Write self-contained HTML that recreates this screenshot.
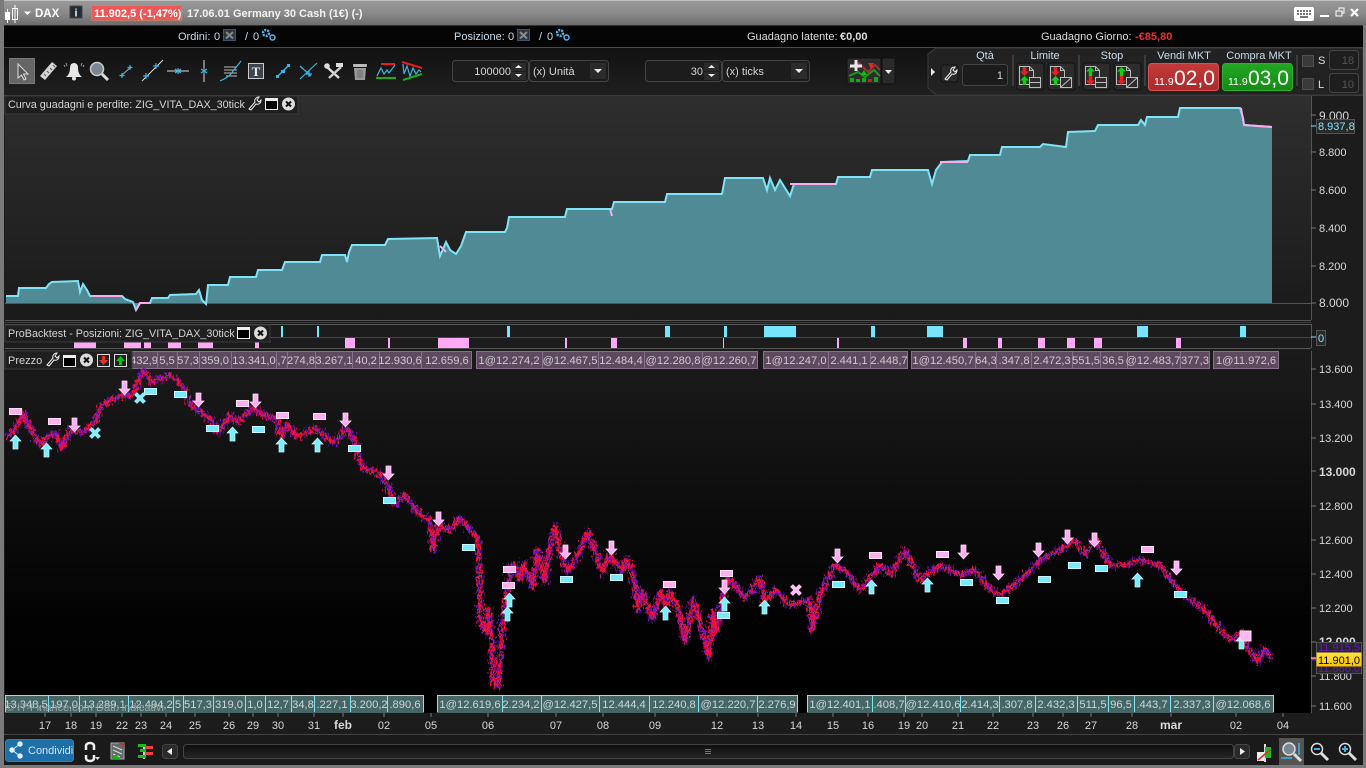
<!DOCTYPE html>
<html><head><meta charset="utf-8"><title>DAX</title>
<style>
html,body{margin:0;padding:0;background:#000;width:1366px;height:768px;overflow:hidden}
svg{display:block;font-family:"Liberation Sans",sans-serif}
text{font-size:11px;fill:#d4d4d4}
.r{shape-rendering:crispEdges}
.p text{fill:#d0c8d0;text-anchor:middle;font-size:11.2px}
.p rect{fill:#5d4a5e;stroke:#8a6f8d;shape-rendering:crispEdges}
.g text{fill:#ccd6d6;text-anchor:middle;font-size:11.2px}
.g rect{fill:#466666;stroke:#7fe8f8;shape-rendering:crispEdges}
.lab text{fill:#c8dcec}
.ax text{fill:#d8d8d8;font-size:11px}
.t text{fill:#d8d8d8;text-anchor:middle;font-size:11px}
.ua{fill:#7fecfb;stroke:#c8f8ff;stroke-width:.7}
.da{fill:#ffb0f2;stroke:#ffe0fa;stroke-width:.7}
.cb{fill:#7aeafa;stroke:#c8f8ff;stroke-width:1;shape-rendering:crispEdges}
.pb{fill:#fdb0ef;stroke:#ffe0fa;stroke-width:1;shape-rendering:crispEdges}
.ic{stroke:#39b6e8;stroke-width:1.2;fill:none}
.ttl{font-size:10.8px}
</style></head><body>
<svg width="1366" height="768" viewBox="0 0 1366 768" xmlns="http://www.w3.org/2000/svg">
<defs>
<linearGradient id="tb" x1="0" y1="0" x2="0" y2="1"><stop offset="0" stop-color="#999"/><stop offset=".5" stop-color="#8a8a8a"/><stop offset="1" stop-color="#6c6c6c"/></linearGradient>
<linearGradient id="pn1" x1="0" y1="0" x2="0" y2="1"><stop offset="0" stop-color="#2e2e2e"/><stop offset="1" stop-color="#1a1a1a"/></linearGradient>
<linearGradient id="pn3" x1="0" y1="0" x2="0" y2="1"><stop offset="0" stop-color="#1b1b1b"/><stop offset=".75" stop-color="#020202"/><stop offset="1" stop-color="#000"/></linearGradient>
<linearGradient id="tl" x1="0" y1="0" x2="0" y2="1"><stop offset="0" stop-color="#111"/><stop offset="1" stop-color="#1f1f1f"/></linearGradient>
<linearGradient id="red" x1="0" y1="0" x2="0" y2="1"><stop offset="0" stop-color="#c43a3a"/><stop offset="1" stop-color="#a82c2c"/></linearGradient>
<linearGradient id="grn" x1="0" y1="0" x2="0" y2="1"><stop offset="0" stop-color="#22a822"/><stop offset="1" stop-color="#158a15"/></linearGradient>
<linearGradient id="yl" x1="0" y1="0" x2="0" y2="1"><stop offset="0" stop-color="#ffe23a"/><stop offset="1" stop-color="#f8c400"/></linearGradient>
<linearGradient id="sb" x1="0" y1="0" x2="0" y2="1"><stop offset="0" stop-color="#0e0e0e"/><stop offset="1" stop-color="#262626"/></linearGradient>
<filter id="j1" x="-2%" y="-10%" width="104%" height="120%" color-interpolation-filters="sRGB"><feTurbulence type="fractalNoise" baseFrequency=".6 .2" numOctaves="2" seed="3"/><feDisplacementMap in="SourceGraphic" scale="17" xChannelSelector="R" yChannelSelector="G"/></filter>
<filter id="j2" x="-2%" y="-10%" width="104%" height="120%" color-interpolation-filters="sRGB"><feTurbulence type="fractalNoise" baseFrequency=".5 .25" numOctaves="2" seed="8"/><feDisplacementMap in="SourceGraphic" scale="15" xChannelSelector="R" yChannelSelector="G"/></filter>
<symbol id="up" overflow="visible"><path d="M0 6 5.500 0 11 6H8V14H3V6Z"/></symbol>
<symbol id="dn" overflow="visible"><path d="M3 0H8V8H11L5.500 14 0 8H3Z"/></symbol>
<symbol id="au" overflow="visible"><path d="M4.500 0 9 4.500H6.200V9H2.800V4.500H0Z" fill="#12d012"/></symbol>
<symbol id="ad" overflow="visible"><path d="M2.800 0H6.200V4.500H9L4.500 9 0 4.500H2.800Z" fill="#e82020"/></symbol>
</defs>

<rect width="1366" height="768" fill="#7a7a7a"/>
<rect width="1366" height="1" fill="#c0c0c0"/>
<rect y="1" width="1366" height="24" fill="url(#tb)"/>
<rect x="4" y="25" width="1359" height="1" fill="#333"/>

<!-- title icons -->
<g class="r" fill="#fff"><rect x="5" y="12" width="5" height="8"/><rect x="7" y="9" width="1" height="14"/><rect x="12.500" y="8.500" width="5" height="11" fill="none" stroke="#fff"/><rect x="14.500" y="5" width="1" height="18"/></g>
<path d="M24 11.500H31L27.500 15Z" fill="#fff"/>
<text x="35" y="17" style="font-size:11.500px;font-weight:bold;fill:#fff">DAX</text>
<rect x="70" y="6" width="12" height="12" fill="#222a33" stroke="#444" class="r"/>
<text x="76" y="16.500" text-anchor="middle" style="font-size:11px;font-weight:bold;fill:#eee">i</text>
<rect x="91.500" y="5.500" width="90" height="15" fill="#ee5757" stroke="#c96" stroke-opacity=".4" class="r"/>
<text x="94" y="17" style="font-weight:bold;fill:#fff">11.902,5 (-1,47%)</text>
<text x="187" y="17" style="font-weight:bold;fill:#f2f2f2">17.06.01</text>
<text x="233" y="17" style="font-weight:bold;fill:#f2f2f2">Germany 30 Cash (1€) (-)</text>
<!-- keyboard and window buttons -->
<rect x="1294" y="7" width="20" height="14" rx="2" fill="#fff"/>
<g class="r" fill="#777"><rect x="1297" y="10" width="2" height="2"/><rect x="1300" y="10" width="2" height="2"/><rect x="1303" y="10" width="2" height="2"/><rect x="1306" y="10" width="2" height="2"/><rect x="1309" y="10" width="2" height="2"/><rect x="1297" y="13" width="2" height="2"/><rect x="1300" y="13" width="2" height="2"/><rect x="1303" y="13" width="2" height="2"/><rect x="1306" y="13" width="2" height="2"/><rect x="1309" y="13" width="2" height="2"/><rect x="1300" y="16" width="8" height="2"/></g>
<rect x="1320" y="15" width="9" height="2" fill="#fff" class="r"/>
<rect x="1336" y="11" width="6" height="5" fill="none" stroke="#fff" class="r"/><path d="M1339 10V8H1344V13H1342" fill="none" stroke="#fff" class="r"/>
<path d="M1351 9 1358 16M1358 9 1351 16" stroke="#fff" stroke-width="2.200"/>

<!-- info row -->
<rect x="4" y="26" width="1359" height="21" fill="#050505"/>
<rect x="4" y="47" width="1359" height="1" fill="#4a4a4a"/>
<g class="lab">
<text x="178" y="40">Ordini:</text><text x="214" y="40">0</text><text x="245" y="40">/</text><text x="253" y="40">0</text>
<text x="454" y="40">Posizione:</text><text x="508" y="40">0</text><text x="539" y="40">/</text><text x="547" y="40">0</text>
<text x="747" y="40" style="fill:#ddd">Guadagno latente:</text><text x="840" y="40" style="fill:#ddd;font-weight:bold">€0,00</text>
<text x="1041" y="40" style="fill:#ddd">Guadagno Giorno:</text>
</g>
<text x="1135" y="40" style="fill:#e83030;font-weight:bold">-€85,80</text>
<rect x="223.500" y="29.500" width="12" height="11" fill="#2c3540" stroke="#3a5570" class="r"/><path d="M226 32 233 38.500M233 32 226 38.500" stroke="#8a8a8a" stroke-width="2"/>
<rect x="517.500" y="29.500" width="12" height="11" fill="#2c3540" stroke="#3a5570" class="r"/><path d="M520 32 527 38.500M527 32 520 38.500" stroke="#8a8a8a" stroke-width="2"/>
<g fill="none" stroke="#58b4ea"><circle cx="266" cy="33" r="3" stroke-width="2.500" stroke-dasharray="2 1"/><circle cx="272.500" cy="37.500" r="2.500" stroke-width="1.500"/><circle cx="560" cy="33" r="3" stroke-width="2.500" stroke-dasharray="2 1"/><circle cx="566.500" cy="37.500" r="2.500" stroke-width="1.500"/></g>

<!-- toolbar -->
<rect x="4" y="48" width="1359" height="47" fill="url(#tl)"/>
<rect x="4" y="95" width="1359" height="1" fill="#3a3a3a"/>
<rect x="9.500" y="58.500" width="25" height="25" fill="#666" stroke="#787878" class="r"/>
<path d="M18 64 18 78 21.500 75 24 80 26 79 23.500 74H28Z" fill="#555" stroke="#ddd"/>
<path d="M40 76 52 62 57 66 45 80Z" fill="#d4d4d4"/><path d="M44 74 46 76M47 71 49 73M50 68 52 70M53 65 55 67" stroke="#555"/>
<path d="M66 77Q70 74 70 68 70 63 74 63 78 63 78 68 78 74 82 77Z" fill="#e6e6e6"/><circle cx="74" cy="78.500" r="2" fill="#e6e6e6"/><path d="M66 63 67 66M82 63 81 66M64 65 65 67M84 65 83 67" stroke="#999"/>
<circle cx="97" cy="69" r="6.500" fill="#7c8690" stroke="#ccc" stroke-width="1.500"/><path d="M102 74 108 80" stroke="#ddd" stroke-width="3"/>
<path d="M122 75 131 67" stroke="#9ab"/><path d="M122 73V78M119.500 75.500H124.500M130 65V70M127.500 67.500H132.500" class="ic"/>
<path d="M142 81 163 60" stroke="#ddd"/><path d="M146 73V79M143 76H149M156 63V69M153 66H159" class="ic"/>
<path d="M167 71H189" stroke="#ddd"/><path d="M178 68V74M175 69 181 73M181 69 175 73" class="ic"/>
<path d="M204 60V82" stroke="#ddd"/><path d="M204 68V74M201 69 207 73M207 69 201 73" class="ic"/>
<path d="M224 67H237M224 70H237M224 73H237M226 76H237" stroke="#bbb"/><path d="M220 81 226 78 230 75 241 61" class="ic"/>
<rect x="248.500" y="63.500" width="15" height="15" fill="#3a444c" stroke="#ccc" class="r"/><text x="256" y="76" text-anchor="middle" style="font-family:'Liberation Serif',serif;font-size:13px;font-weight:bold;fill:#eee">T</text>
<path d="M277 77 289 65" stroke="#39b6e8" stroke-width="1.500"/><rect x="276" y="75" width="3" height="3" fill="#39b6e8"/><rect x="287" y="64" width="3" height="3" fill="#39b6e8"/><rect x="281" y="70" width="4" height="3" fill="#39b6e8"/>
<path d="M300 66 311 76M300 79 317 63" class="ic"/><path d="M309 71V77M306 74H312" class="ic"/>
<path d="M327 67 339 78" stroke="#ddd" stroke-width="2.500"/><path d="M341 67 329 78" stroke="#ccc" stroke-width="2.500"/><circle cx="327" cy="66" r="2.800" fill="#ddd"/><rect x="336" y="63" width="7" height="4" fill="#ddd"/>
<path d="M354 68H366L365 80H355Z" fill="#999"/><rect x="353" y="64" width="14" height="3" rx="1" fill="#bbb"/><path d="M358 70V78M360 70V78M362 70V78" stroke="#666"/>
<rect x="381" y="63" width="14" height="2" fill="#e81c1c" class="r"/><rect x="376" y="77" width="20" height="2" fill="#14b014" class="r"/>
<path d="M377 76 381 68 384 74 387 70 389 73 395 65" class="ic"/>
<path d="M402 62 422 68" stroke="#e81c1c" stroke-width="2"/><path d="M403 80 422 74" stroke="#14b014" stroke-width="2"/>
<path d="M403 64 404 74 407 66 410 76 413 68 416 74 419 70 421 72" class="ic"/>

<!-- qty inputs -->
<g fill="#1c1c1c" stroke="#444"><rect x="452.500" y="60.500" width="76" height="21" rx="3"/><rect x="529.500" y="60.500" width="79" height="21" rx="3"/><rect x="645.500" y="60.500" width="76" height="21" rx="3"/><rect x="722.500" y="60.500" width="87" height="21" rx="3"/></g>
<text x="511" y="75" text-anchor="end">100000</text><text x="533" y="75">(x) Unità</text>
<text x="703" y="75" text-anchor="end">30</text><text x="726" y="75">(x) ticks</text>
<g class="r" fill="#2b2b2b"><rect x="511" y="63" width="15" height="8"/><rect x="511" y="72" width="15" height="8"/><rect x="704" y="63" width="15" height="8"/><rect x="704" y="72" width="15" height="8"/><rect x="590" y="63" width="16" height="16"/><rect x="791" y="63" width="16" height="16"/></g>
<path d="M515 68H522L518.500 65ZM515 74H522L518.500 77ZM708 68H715L711.500 65ZM708 74H715L711.500 77ZM594 69H602L598 73ZM795 69H803L799 73Z" fill="#eee"/>
<!-- strategy btn -->
<rect x="847" y="58" width="34" height="26" rx="2" fill="#2c2c2c" stroke="#111"/>
<path d="M849 68 859 63 868 72 875 65 880 70" stroke="#a03030" stroke-width="2" fill="none"/>
<path d="M849 76 858 72 865 77 874 70 880 76" stroke="#1a9a1a" stroke-width="2" fill="none"/>
<path d="M850 66H862M856 60V71" stroke="#e8e8e8" stroke-width="3"/>
<path d="M868 63H874L871 69Z" fill="#e02828"/><path d="M861 75H867L864 70Z" fill="#14c014"/>
<g fill="#14a814" class="r"><rect x="850" y="78" width="4" height="4"/><rect x="856" y="79" width="4" height="3"/><rect x="862" y="78" width="4" height="4"/><rect x="874" y="77" width="4" height="5"/></g><rect x="868" y="79" width="4" height="3" fill="#c02020" class="r"/>
<rect x="882" y="58" width="13" height="26" rx="2" fill="#2a2a2a" stroke="#111"/><path d="M885 70H892L888.500 74Z" fill="#eee"/>

<!-- order panel -->
<path d="M1363 48H936L928 54V88L936 95H1363Z" fill="#222" stroke="#3a3a3a"/>
<path d="M931 68V76L935 72Z" fill="#eee"/>
<rect x="941" y="65" width="17" height="17" rx="3" fill="#2b2b2b" stroke="#111"/>
<path d="M945 79 951 72C950 69 952 67 955 67L953 70 955 72 957 70C957 73 955 75 952 74L947 80Z" fill="none" stroke="#eee"/>
<rect x="962.500" y="64.500" width="45" height="21" rx="3" fill="#1c1c1c" stroke="#444"/>
<text x="1003" y="79" text-anchor="end">1</text>
<g class="lab"><text x="985" y="59" text-anchor="middle">Qtà</text><text x="1045" y="59" text-anchor="middle">Limite</text><text x="1112" y="59" text-anchor="middle">Stop</text><text x="1184" y="59" text-anchor="middle">Vendi MKT</text><text x="1259" y="59" text-anchor="middle">Compra MKT</text></g>
<path d="M1013 55V86M1079 55V86M1145 55V86M1297 55V86" stroke="#555" class="r"/>
<g>
<rect x="1017" y="63" width="27" height="27" rx="3" fill="#2c2c2c" stroke="#111"/><rect x="1048" y="63" width="27" height="27" rx="3" fill="#2c2c2c" stroke="#111"/><rect x="1083" y="63" width="27" height="27" rx="3" fill="#2c2c2c" stroke="#111"/><rect x="1114" y="63" width="27" height="27" rx="3" fill="#2c2c2c" stroke="#111"/>
<g fill="none" stroke="#bbb"><path d="M1019.500 66.500H1029.500L1033.500 70.500V84.500H1019.500ZM1029.500 66.500V70.500H1033.500"/><path d="M1050.500 66.500H1060.500L1064.500 70.500V84.500H1050.500ZM1060.500 66.500V70.500H1064.500"/><path d="M1085.500 66.500H1095.500L1099.500 70.500V84.500H1085.500ZM1095.500 66.500V70.500H1099.500"/><path d="M1116.500 66.500H1126.500L1130.500 70.500V84.500H1116.500ZM1126.500 66.500V70.500H1130.500"/></g>
<g fill="#2c2c2c" stroke="#bbb"><rect x="1029.500" y="77.500" width="11" height="10"/><rect x="1060.500" y="77.500" width="11" height="10"/><rect x="1095.500" y="77.500" width="11" height="10"/><rect x="1126.500" y="77.500" width="11" height="10"/></g>
<path d="M1030 82.500H1040M1096 82.500H1106M1061 87 1071 78M1127 87 1137 78" stroke="#bbb"/>
<use href="#ad" x="1020" y="67"/><use href="#au" x="1020" y="76"/><use href="#ad" x="1051" y="67"/><use href="#au" x="1051" y="76"/>
<use href="#au" x="1086" y="67"/><use href="#ad" x="1086" y="76"/><use href="#au" x="1117" y="67"/><use href="#ad" x="1117" y="76"/>
</g>
<rect x="1148.500" y="63.500" width="70" height="27" rx="3" fill="url(#red)" stroke="#d85050"/>
<rect x="1222.500" y="63.500" width="70" height="27" rx="3" fill="url(#grn)" stroke="#30b030"/>
<text x="1154" y="85" style="font-size:10.500px;fill:#fff">11.9</text><text x="1174" y="85" style="font-size:21px;fill:#fff">02,0</text>
<text x="1228" y="85" style="font-size:10.500px;fill:#fff">11.9</text><text x="1248" y="85" style="font-size:21px;fill:#fff">03,0</text>
<rect x="1302.500" y="55.500" width="11" height="11" fill="#3a3a3a" stroke="#505050" class="r"/><rect x="1302.500" y="78.500" width="11" height="11" fill="#3a3a3a" stroke="#505050" class="r"/>
<text x="1318" y="64" style="fill:#ddd">S</text><text x="1318" y="88" style="fill:#ddd">L</text>
<rect x="1329.500" y="50.500" width="29" height="19" rx="3" fill="#1e1e1e" stroke="#444"/><rect x="1329.500" y="73.500" width="29" height="19" rx="3" fill="#1e1e1e" stroke="#444"/>
<text x="1354" y="64" text-anchor="end" style="fill:#555">18</text><text x="1354" y="88" text-anchor="end" style="fill:#555">10</text>

<!-- pane bg -->
<rect x="4" y="96" width="1359" height="639" fill="#1c1c1c"/>
<rect x="5" y="96" width="1306" height="224" fill="url(#pn1)"/>
<path d="M1311.500 96V320M5 320.500H1311" stroke="#555" class="r"/>
<rect x="4" y="322" width="1307" height="1" fill="#3a3a3a" class="r"/>
<rect x="5" y="351" width="1306" height="362" fill="url(#pn3)"/>
<path d="M1311.500 351V713M1311.500 324V348M5 324.500H1311M5 348.500H1311" stroke="#555" class="r"/>
<path d="M5 303.500H1311" stroke="#555" class="r"/>

<!-- equity -->
<path d="M6 303V296L10 296 18 296 19 288 46 288 49 284 52 282 78 281 80 292 83 284 87 290 90 296 122 296 125 299 133 302 136 310 140 303 150 303 152 298 168 298 170 295 196 294 199 290 202 300 206 304 208 285 228 285 230 277 256 277 258 270 282 270 285 262 320 262 322 255 345 255 347 262 349 252 352 245 385 245 388 239 437 238 440 256 446 242 450 250 456 254 461 246 466 232 505 232 507 228 509 217 565 217 567 209 612 209 614 202 665 202 667 194 722 194 725 178 763 178 767 190 770 178 775 190 780 180 785 188 790 196 794 184 836 184 838 177 870 177 872 170 928 170 932 184 936 170 942 162 968 161 970 155 1000 155 1002 147 1040 147 1043 144 1066 147 1068 132 1095 131 1098 125 1138 125 1141 120 1145 125 1147 117 1178 117 1180 108 1240 108 1243 118 1244 125 1272 127V303Z" fill="#508a94"/>
<path d="M6 296 18 296 19 288 46 288 49 284 52 282 78 281 80 292 83 284 87 290 90 296 122 296 125 299 133 302 136 310 140 303 150 303 152 298 168 298 170 295 196 294 199 290 202 300 206 304 208 285 228 285 230 277 256 277 258 270 282 270 285 262 320 262 322 255 345 255 347 262 349 252 352 245 385 245 388 239 437 238 440 256 446 242 450 250 456 254 461 246 466 232 505 232 507 228 509 217 565 217 567 209 612 209 614 202 665 202 667 194 722 194 725 178 763 178 767 190 770 178 775 190 780 180 785 188 790 196 794 184 836 184 838 177 870 177 872 170 928 170 932 184 936 170 942 162 968 161 970 155 1000 155 1002 147 1040 147 1043 144 1066 147 1068 132 1095 131 1098 125 1138 125 1141 120 1145 125 1147 117 1178 117 1180 108 1240 108 1243 118 1244 125 1272 127" fill="none" stroke="#7fe3f7" stroke-width="2"/>
<path d="M92 296H122M136 310 140 303H150M610 209 612 216M790 184H836M940 162H968M1244 125 1272 127M440 246 446 252M1241 108 1244 125" fill="none" stroke="#ffa8ee" stroke-width="2"/>

<g class="ax">
<text x="1319" y="120" style="font-size:12px">9.000</text><text x="1319" y="156">8.800</text><text x="1319" y="194">8.600</text><text x="1319" y="232">8.400</text><text x="1319" y="270">8.200</text><text x="1319" y="307" style="font-size:12px">8.000</text>
<text x="1319" y="373">13.600</text><text x="1319" y="408">13.400</text><text x="1319" y="442">13.200</text><text x="1319" y="476" style="font-weight:bold;font-size:12px">13.000</text><text x="1319" y="510">12.800</text><text x="1319" y="544">12.600</text><text x="1319" y="578">12.400</text><text x="1319" y="612">12.200</text><text x="1319" y="646" style="font-weight:bold;font-size:12px">12.000</text><text x="1319" y="680">11.800</text><text x="1319" y="710">11.600</text>
</g>
<path d="M1311 115H1316M1311 152H1316M1311 190H1316M1311 228H1316M1311 266H1316M1311 303H1316M1311 369H1316M1311 404H1316M1311 438H1316M1311 471H1316M1311 506H1316M1311 540H1316M1311 574H1316M1311 608H1316M1311 642H1316M1311 676H1316M1311 706H1316" stroke="#777" class="r"/>
<rect x="1316.500" y="119.500" width="38" height="14" fill="#2a2a2a" stroke="#555" class="r"/>
<path d="M1311 126H1316" stroke="#7fe3f7" class="r"/>
<text x="1318" y="130" style="fill:#7fe3f7">8.937,8</text>

<!-- positions -->
<rect x="5" y="337" width="1306" height="1" fill="#2c3cc0" class="r"/>
<g fill="#75e4ff" class="r"><rect x="281" y="326" width="2" height="11"/><rect x="317" y="326" width="2" height="11"/><rect x="507" y="326" width="3" height="11"/><rect x="665" y="326" width="5" height="11"/><rect x="724" y="326" width="3" height="11"/><rect x="764" y="326" width="32" height="11"/><rect x="871" y="326" width="4" height="11"/><rect x="927" y="326" width="16" height="11"/><rect x="1137" y="326" width="11" height="11"/><rect x="1240" y="326" width="6" height="11"/></g>
<g fill="#ffa8f5" class="r"><rect x="74" y="338" width="22" height="10"/><rect x="124" y="338" width="17" height="10"/><rect x="144" y="338" width="7" height="10"/><rect x="168" y="338" width="13" height="10"/><rect x="198" y="338" width="15" height="10"/><rect x="255" y="338" width="4" height="10"/><rect x="345" y="338" width="10" height="10"/><rect x="388" y="338" width="2" height="10"/><rect x="438" y="338" width="31" height="10"/><rect x="565" y="338" width="2" height="10"/><rect x="611" y="338" width="6" height="10"/><rect x="723" y="338" width="1" height="10"/><rect x="837" y="338" width="2" height="10"/><rect x="963" y="338" width="4" height="10"/><rect x="998" y="338" width="4" height="10"/><rect x="1038" y="338" width="7" height="10"/><rect x="1067" y="338" width="8" height="10"/><rect x="1094" y="338" width="8" height="10"/><rect x="1176" y="338" width="5" height="10"/></g>
<rect x="1316.500" y="330.500" width="9" height="15" fill="#2a2a2a" stroke="#555" class="r"/>
<path d="M1311 337H1316" stroke="#7fe3f7" class="r"/>
<text x="1318" y="342" style="fill:#7fe3f7">0</text>

<!-- top purple tags -->
<g class="p">
<rect x="131.500" y="351.500" width="26" height="17"/><text x="144" y="364">432,9</text>
<rect x="157.500" y="351.500" width="20" height="17"/><text x="167" y="364">5,5</text>
<rect x="177.500" y="351.500" width="22" height="17"/><text x="188" y="364">57,3</text>
<rect x="199.500" y="351.500" width="32" height="17"/><text x="215" y="364">359,0</text>
<rect x="231.500" y="351.500" width="45" height="17"/><text x="254" y="364">13.341,0</text>
<rect x="276.500" y="351.500" width="11" height="17"/><text x="282" y="364">,7</text>
<rect x="287.500" y="351.500" width="28" height="17"/><text x="301" y="364">274,8</text>
<rect x="315.500" y="351.500" width="37" height="17"/><text x="334" y="364">3.267,1</text>
<rect x="352.500" y="351.500" width="27" height="17"/><text x="366" y="364">40,2</text>
<rect x="379.500" y="351.500" width="42" height="17"/><text x="400" y="364">12.930,6</text>
<rect x="421.500" y="351.500" width="50" height="17"/><text x="447" y="364">12.659,6</text>
<rect x="476.500" y="351.500" width="66" height="17"/><text x="509" y="364">1@12.274,2</text>
<rect x="542.500" y="351.500" width="56" height="17"/><text x="570" y="364">@12.467,5</text>
<rect x="598.500" y="351.500" width="46" height="17"/><text x="621" y="364">12.484,4</text>
<rect x="644.500" y="351.500" width="58" height="17"/><text x="673" y="364">@12.280,8</text>
<rect x="702.500" y="351.500" width="55" height="17"/><text x="729" y="364">@12.260,7</text>
<rect x="763.500" y="351.500" width="65" height="17"/><text x="796" y="364">1@12.247,0</text>
<rect x="828.500" y="351.500" width="42" height="17"/><text x="849" y="364">2.441,1</text>
<rect x="870.500" y="351.500" width="37" height="17"/><text x="889" y="364">2.448,7</text>
<rect x="911.500" y="351.500" width="64" height="17"/><text x="943" y="364">1@12.450,7</text>
<rect x="975.500" y="351.500" width="21" height="17"/><text x="986" y="364">64,3</text>
<rect x="996.500" y="351.500" width="35" height="17"/><text x="1014" y="364">.347,8</text>
<rect x="1031.500" y="351.500" width="41" height="17"/><text x="1052" y="364">2.472,3</text>
<rect x="1072.500" y="351.500" width="28" height="17"/><text x="1086" y="364">551,5</text>
<rect x="1100.500" y="351.500" width="27" height="17"/><text x="1113" y="364">36,5</text>
<rect x="1127.500" y="351.500" width="53" height="17"/><text x="1153" y="364">@12.483,7</text>
<rect x="1180.500" y="351.500" width="29" height="17"/><text x="1195" y="364">377,3</text>
<rect x="1213.500" y="351.500" width="65" height="17"/><text x="1246" y="364">1@11.972,6</text>
</g>

<!-- price line -->
<g fill="none" stroke-linejoin="round">
<polyline filter="url(#j1)" stroke="#6a14c8" stroke-width="3.400" points="6,437 15,430 23,413 35,437 42,445 50,435 55,433 62,448 70,430 83,432 95,422 102,405 123,395 133,395 143,370 152,382 170,375 182,385 190,405 200,412 212,420 217,433 230,415 237,422 253,408 263,415 277,418 282,437 287,423 297,437 315,428 333,443 347,428 355,442 360,463 367,470 375,470 385,480 395,505 405,495 420,515 430,520 433,550 438,525 450,530 460,517 470,530 477,537 480,570 480,620 487,633 488,607 492,637 493,680 498,688 503,620 512,563 520,580 523,563 533,587 537,550 545,582 548,553 556,527 560,550 567,572 577,557 588,532 598,560 603,573 610,553 622,572 627,558 633,573 638,610 642,590 653,620 660,592 667,610 670,592 678,607 685,642 693,600 703,633 709,658 713,610 715,633 728,578 745,598 760,578 765,602 775,590 790,605 810,600 812,630 820,595 835,565 845,570 860,590 880,565 890,575 905,550 920,580 940,565 960,575 975,570 990,590 1000,595 1020,580 1040,560 1060,550 1075,540 1085,555 1095,540 1110,565 1125,565 1140,560 1160,565 1175,585 1190,600 1205,610 1220,630 1232,640 1242,632 1244,643 1258,662 1264,648 1271,658"/>
<polyline filter="url(#j2)" stroke="#f01038" stroke-width="3" points="6,437 15,430 23,413 35,437 42,445 50,435 55,433 62,448 70,430 83,432 95,422 102,405 123,395 133,395 143,370 152,382 170,375 182,385 190,405 200,412 212,420 217,433 230,415 237,422 253,408 263,415 277,418 282,437 287,423 297,437 315,428 333,443 347,428 355,442 360,463 367,470 375,470 385,480 395,505 405,495 420,515 430,520 433,550 438,525 450,530 460,517 470,530 477,537 480,570 480,620 487,633 488,607 492,637 493,680 498,688 503,620 512,563 520,580 523,563 533,587 537,550 545,582 548,553 556,527 560,550 567,572 577,557 588,532 598,560 603,573 610,553 622,572 627,558 633,573 638,610 642,590 653,620 660,592 667,610 670,592 678,607 685,642 693,600 703,633 709,658 713,610 715,633 728,578 745,598 760,578 765,602 775,590 790,605 810,600 812,630 820,595 835,565 845,570 860,590 880,565 890,575 905,550 920,580 940,565 960,575 975,570 990,590 1000,595 1020,580 1040,560 1060,550 1075,540 1085,555 1095,540 1110,565 1125,565 1140,560 1160,565 1175,585 1190,600 1205,610 1220,630 1232,640 1242,632 1244,643 1258,662 1264,648 1271,658"/>
</g>

<!-- rects -->
<g class="pb"><rect x="9.500" y="408.500" width="12" height="6"/><rect x="48.500" y="418.500" width="12" height="6"/><rect x="236.500" y="400.500" width="12" height="6"/><rect x="276.500" y="412.500" width="12" height="6"/><rect x="313.500" y="413.500" width="12" height="6"/><rect x="503.500" y="566.500" width="12" height="6"/><rect x="502.500" y="582.500" width="12" height="6"/><rect x="663.500" y="581.500" width="12" height="6"/><rect x="720.500" y="570.500" width="12" height="6"/><rect x="869.500" y="552.500" width="12" height="6"/><rect x="936.500" y="551.500" width="12" height="6"/><rect x="1141.500" y="546.500" width="12" height="6"/></g>
<g class="cb"><rect x="144.500" y="388.500" width="12" height="6"/><rect x="174.500" y="391.500" width="12" height="6"/><rect x="206.500" y="425.500" width="12" height="6"/><rect x="252.500" y="426.500" width="12" height="6"/><rect x="348.500" y="445.500" width="12" height="6"/><rect x="383.500" y="497.500" width="12" height="6"/><rect x="462.500" y="544.500" width="12" height="6"/><rect x="560.500" y="576.500" width="12" height="6"/><rect x="610.500" y="574.500" width="12" height="6"/><rect x="717.500" y="612.500" width="12" height="6"/><rect x="832.500" y="581.500" width="12" height="6"/><rect x="960.500" y="579.500" width="12" height="6"/><rect x="996.500" y="597.500" width="12" height="6"/><rect x="1038.500" y="576.500" width="12" height="6"/><rect x="1068.500" y="562.500" width="12" height="6"/><rect x="1095.500" y="565.500" width="12" height="6"/><rect x="1174.500" y="591.500" width="12" height="6"/></g>
<g class="ua"><use href="#up" x="10" y="435"/><use href="#up" x="41" y="443"/><use href="#up" x="227" y="427"/><use href="#up" x="276" y="438"/><use href="#up" x="312" y="438"/><use href="#up" x="502" y="607"/><use href="#up" x="504" y="593"/><use href="#up" x="660" y="606"/><use href="#up" x="719" y="597"/><use href="#up" x="759" y="600"/><use href="#up" x="866" y="580"/><use href="#up" x="922" y="578"/><use href="#up" x="1132" y="573"/><use href="#up" x="1236" y="635"/></g>
<g class="da"><use href="#dn" x="69" y="418"/><use href="#dn" x="119" y="381"/><use href="#dn" x="193" y="393"/><use href="#dn" x="250" y="394"/><use href="#dn" x="340" y="413"/><use href="#dn" x="383" y="466"/><use href="#dn" x="433" y="512"/><use href="#dn" x="560" y="545"/><use href="#dn" x="606" y="541"/><use href="#dn" x="719" y="580"/><use href="#dn" x="832" y="549"/><use href="#dn" x="958" y="545"/><use href="#dn" x="993" y="566"/><use href="#dn" x="1033" y="543"/><use href="#dn" x="1062" y="530"/><use href="#dn" x="1089" y="533"/><use href="#dn" x="1171" y="561"/></g>
<path d="M90.500 428.500 99.500 437.500M99.500 428.500 90.500 437.500M135.500 393.500 144.500 402.500M144.500 393.500 135.500 402.500" stroke="#8ceefc" stroke-width="4"/>
<path d="M791.500 585.500 800.500 594.500M800.500 585.500 791.500 594.500" stroke="#ffc0f4" stroke-width="4"/>
<rect x="1240" y="631" width="11" height="10" fill="#fdb8f0" stroke="#ffe0fa"/>

<!-- price tag -->
<rect x="1316.500" y="642.500" width="45" height="31" fill="#262626" stroke="#555" class="r"/>
<text x="1318" y="651" style="fill:#6a14c8">11.915,5</text>
<text x="1318" y="672" style="fill:#6a14c8">11.886,0</text>
<rect x="1316.500" y="652.500" width="45" height="14" fill="url(#yl)" class="r"/>
<text x="1318" y="664" style="fill:#000">11.901,0</text>
<path d="M1311 658H1316" stroke="#f0f0ff" class="r"/><path d="M1311 659H1316" stroke="#f01038" class="r"/><path d="M1311 660H1316" stroke="#4040c0" class="r"/>

<!-- bottom tags -->
<g class="g">
<rect x="5.500" y="695.500" width="43" height="17"/><text x="26" y="708">13.348,5</text>
<rect x="48.500" y="695.500" width="31" height="17"/><text x="64" y="708">197,0</text>
<rect x="79.500" y="695.500" width="49" height="17"/><text x="104" y="708">13.289,1</text>
<rect x="128.500" y="695.500" width="45" height="17"/><text x="151" y="708">12.494,2</text>
<rect x="173.500" y="695.500" width="10" height="17"/><text x="178" y="708">5</text>
<rect x="183.500" y="695.500" width="30" height="17"/><text x="198" y="708">517,3</text>
<rect x="213.500" y="695.500" width="32" height="17"/><text x="229" y="708">319,0</text>
<rect x="245.500" y="695.500" width="20" height="17"/><text x="255" y="708">1,0</text>
<rect x="265.500" y="695.500" width="26" height="17"/><text x="278" y="708">12,7</text>
<rect x="291.500" y="695.500" width="23" height="17"/><text x="303" y="708">34,8</text>
<rect x="314.500" y="695.500" width="36" height="17"/><text x="332" y="708">.227,1</text>
<rect x="350.500" y="695.500" width="37" height="17"/><text x="369" y="708">3.200,2</text>
<rect x="387.500" y="695.500" width="36" height="17"/><text x="405" y="708">.890,6</text>
<rect x="437.500" y="695.500" width="65" height="17"/><text x="470" y="708">1@12.619,6</text>
<rect x="502.500" y="695.500" width="39" height="17"/><text x="521" y="708">2.234,2</text>
<rect x="541.500" y="695.500" width="58" height="17"/><text x="570" y="708">@12.427,5</text>
<rect x="599.500" y="695.500" width="50" height="17"/><text x="624" y="708">12.444,4</text>
<rect x="649.500" y="695.500" width="49" height="17"/><text x="674" y="708">12.240,8</text>
<rect x="698.500" y="695.500" width="59" height="17"/><text x="728" y="708">@12.220,7</text>
<rect x="757.500" y="695.500" width="40" height="17"/><text x="777" y="708">2.276,9</text>
<rect x="807.500" y="695.500" width="65" height="17"/><text x="840" y="708">1@12.401,1</text>
<rect x="872.500" y="695.500" width="33" height="17"/><text x="889" y="708">.408,7</text>
<rect x="905.500" y="695.500" width="55" height="17"/><text x="933" y="708">@12.410,6</text>
<rect x="960.500" y="695.500" width="39" height="17"/><text x="980" y="708">2.414,3</text>
<rect x="999.500" y="695.500" width="36" height="17"/><text x="1017" y="708">.307,8</text>
<rect x="1035.500" y="695.500" width="42" height="17"/><text x="1056" y="708">2.432,3</text>
<rect x="1077.500" y="695.500" width="31" height="17"/><text x="1093" y="708">511,5</text>
<rect x="1108.500" y="695.500" width="26" height="17"/><text x="1121" y="708">96,5</text>
<rect x="1134.500" y="695.500" width="36" height="17"/><text x="1152" y="708">.443,7</text>
<rect x="1170.500" y="695.500" width="43" height="17"/><text x="1192" y="708">2.337,3</text>
<rect x="1213.500" y="695.500" width="60" height="17"/><text x="1243" y="708">@12.068,6</text>
</g>
<path d="M5 712.500H424M437 712.500H798M807 712.500H1274" stroke="#466666" class="r"/>
<text x="6" y="711" style="fill:#9aa4a4">© IT-Finance.com  Dati: indicativi</text>

<!-- titles -->
<rect x="5" y="96" width="293" height="18" fill="#1f1f1f" stroke="#3a3a3a"/>
<text x="8" y="108" class="ttl">Curva guadagni e perdite: ZIG_VITA_DAX_30tick</text>
<path d="M249 109 255 102C254 100 256 97 259 97L257 100 259 102 261 100C261 103 259 105 256 104L251 110Z" fill="none" stroke="#eee"/>
<rect x="265.500" y="98.500" width="12" height="11" fill="#000" stroke="#eee" class="r"/><rect x="265" y="98" width="13" height="3" fill="#eee" class="r"/>
<circle cx="288.500" cy="104" r="6.500" fill="#ddd"/><path d="M286 101.500 291 106.500M291 101.500 286 106.500" stroke="#111" stroke-width="2"/>

<rect x="5" y="325" width="265" height="17" fill="#1f1f1f" stroke="#3a3a3a"/>
<text x="8" y="337" class="ttl">ProBacktest - Posizioni: ZIG_VITA_DAX_30tick</text>
<rect x="237.500" y="327.500" width="12" height="11" fill="#000" stroke="#eee" class="r"/><rect x="237" y="327" width="13" height="3" fill="#eee" class="r"/>
<circle cx="260.500" cy="333" r="6.500" fill="#ddd"/><path d="M258 330.500 263 335.500M263 330.500 258 335.500" stroke="#111" stroke-width="2"/>

<rect x="5" y="351" width="127" height="18" fill="#1f1f1f" stroke="#3a3a3a"/>
<text x="8" y="364">Prezzo</text>
<path d="M47 365 53 358C52 356 54 353 57 353L55 356 57 358 59 356C59 359 57 361 54 360L49 366Z" fill="none" stroke="#eee"/>
<rect x="63.500" y="355.500" width="12" height="11" fill="#000" stroke="#eee" class="r"/><rect x="63" y="355" width="13" height="3" fill="#eee" class="r"/>
<circle cx="86.500" cy="360" r="6.500" fill="#ddd"/><path d="M84 357.500 89 362.500M89 357.500 84 362.500" stroke="#111" stroke-width="2"/>
<rect x="97.500" y="354.500" width="12" height="12" fill="#222" stroke="#ddd" class="r"/><path d="M102 356h3v4h3l-4.500 5-4.500-5h3z" fill="#e83030"/>
<rect x="114.500" y="354.500" width="12" height="12" fill="#222" stroke="#ddd" class="r"/><path d="M119 365v-4h-3l4.500-5 4.500 5h-3v4z" fill="#14c014"/>

<!-- time axis -->
<rect x="4" y="713" width="1359" height="21" fill="#1c1c1c"/>
<rect x="4" y="734" width="1359" height="1" fill="#444"/>
<g class="t">
<text x="45" y="729">17</text><text x="71" y="729">18</text><text x="96" y="729">19</text><text x="122" y="729">22</text><text x="141" y="729">23</text><text x="166" y="729">24</text><text x="195" y="729">25</text><text x="229" y="729">26</text><text x="253" y="729">29</text><text x="278" y="729">30</text><text x="314" y="729">31</text><text x="343" y="729" style="font-weight:bold;font-size:12px">feb</text><text x="384" y="729">02</text><text x="431" y="729">05</text><text x="488" y="729">06</text><text x="556" y="729">07</text><text x="603" y="729">08</text><text x="655" y="729">09</text><text x="717" y="729">12</text><text x="758" y="729">13</text><text x="796" y="729">14</text><text x="833" y="729">15</text><text x="868" y="729">16</text><text x="904" y="729">19</text><text x="922" y="729">20</text><text x="958" y="729">21</text><text x="993" y="729">22</text><text x="1033" y="729">23</text><text x="1063" y="729">26</text><text x="1091" y="729">27</text><text x="1132" y="729">28</text><text x="1171" y="729" style="font-weight:bold;font-size:12px">mar</text><text x="1236" y="729">02</text><text x="1283" y="729">04</text>
</g>
<path d="M45 713V717M71 713V717M96 713V717M122 713V717M141 713V717M166 713V717M195 713V717M229 713V717M253 713V717M278 713V717M314 713V717M343 713V717M384 713V717M431 713V717M488 713V717M556 713V717M603 713V717M655 713V717M717 713V717M758 713V717M796 713V717M833 713V717M868 713V717M904 713V717M922 713V717M958 713V717M993 713V717M1033 713V717M1063 713V717M1091 713V717M1132 713V717M1171 713V717M1236 713V717M1283 713V717" stroke="#777" class="r"/>

<!-- bottom bar -->
<rect x="4" y="735" width="1359" height="30" fill="#1a1a1a"/>
<rect x="0" y="765" width="1366" height="3" fill="#7a7a7a"/>
<rect x="0" y="0" width="4" height="768" fill="#7a7a7a"/>
<rect x="5.500" y="739.500" width="68" height="22" rx="3" fill="#1f6fa8" stroke="#2a80c0"/>
<circle cx="20" cy="744" r="2.700" fill="#dfefff"/><circle cx="20" cy="756" r="2.700" fill="#dfefff"/><circle cx="12" cy="750" r="2.700" fill="#dfefff"/><path d="M20 744 12 750 20 756" stroke="#dfefff" fill="none"/>
<text x="28" y="754" style="fill:#d0e4f2">Condividi</text>
<path d="M86 750V746C86 742 94 742 94 746V750M86 755V758C86 762 94 762 94 758V755" stroke="#eee" stroke-width="2.500" fill="none"/><path d="M95 757H100L97.500 760Z" fill="#ddd"/>
<rect x="111" y="743" width="13" height="16" fill="#606a6a" stroke="#aaa"/><path d="M113 746 122 750M113 750 122 754M113 754 120 757" stroke="#ddd"/><path d="M119 743H124V748Z" fill="#e02828"/><path d="M112 759 116 754 120 759Z" fill="#14b014"/>
<g class="r"><rect x="143" y="744" width="2" height="15" fill="#ccc"/><rect x="138" y="744" width="8" height="3" fill="#14c014"/><rect x="145" y="746" width="8" height="3" fill="#ef4040"/><rect x="140" y="749" width="6" height="3" fill="#14c014"/><rect x="145" y="752" width="8" height="3" fill="#ef4040"/><rect x="138" y="755" width="8" height="3" fill="#14c014"/></g>
<rect x="162.500" y="744.500" width="15" height="14" rx="3" fill="#2a2a2a" stroke="#444"/><path d="M172 748V755L167 751.500Z" fill="#eee"/>
<rect x="183.500" y="744.500" width="1050" height="14" rx="3" fill="url(#sb)" stroke="#444"/>
<path d="M705 749.500H711M705 751.500H711M705 753.500H711" stroke="#777" class="r"/>
<rect x="1234.500" y="744.500" width="15" height="14" rx="3" fill="#2a2a2a" stroke="#444"/><path d="M1240 748V755L1245 751.500Z" fill="#eee"/>
<rect x="1264" y="744" width="2" height="18" fill="#ddd" class="r"/><rect x="1265" y="747" width="6" height="11" fill="#14c014" class="r"/><rect x="1257" y="752" width="7" height="9" fill="#eee" class="r"/><path d="M1258 760 1270 750" stroke="#e02828" stroke-width="1.500"/>
<rect x="1279" y="738" width="25" height="27" fill="#555" class="r"/>
<circle cx="1289" cy="749" r="6" fill="#7c8690" stroke="#ddd" stroke-width="1.500"/><path d="M1294 754 1301 761" stroke="#ddd" stroke-width="3"/><path d="M1299 743V755M1281 758H1292" stroke="#39b6e8" stroke-width="1.500"/>
<circle cx="1317" cy="749" r="5.500" fill="#111" stroke="#ddd" stroke-width="1.500"/><path d="M1314 749H1320" stroke="#39b6e8" stroke-width="2"/><path d="M1321 753 1328 760" stroke="#ddd" stroke-width="3"/>
<circle cx="1345" cy="749" r="5.500" fill="#111" stroke="#ddd" stroke-width="1.500"/><path d="M1342 749H1348M1345 746V752" stroke="#39b6e8" stroke-width="2"/><path d="M1349 753 1356 760" stroke="#ddd" stroke-width="3"/>
<rect x="1363" y="26" width="3" height="742" fill="#7a7a7a"/>
</svg>
</body></html>
